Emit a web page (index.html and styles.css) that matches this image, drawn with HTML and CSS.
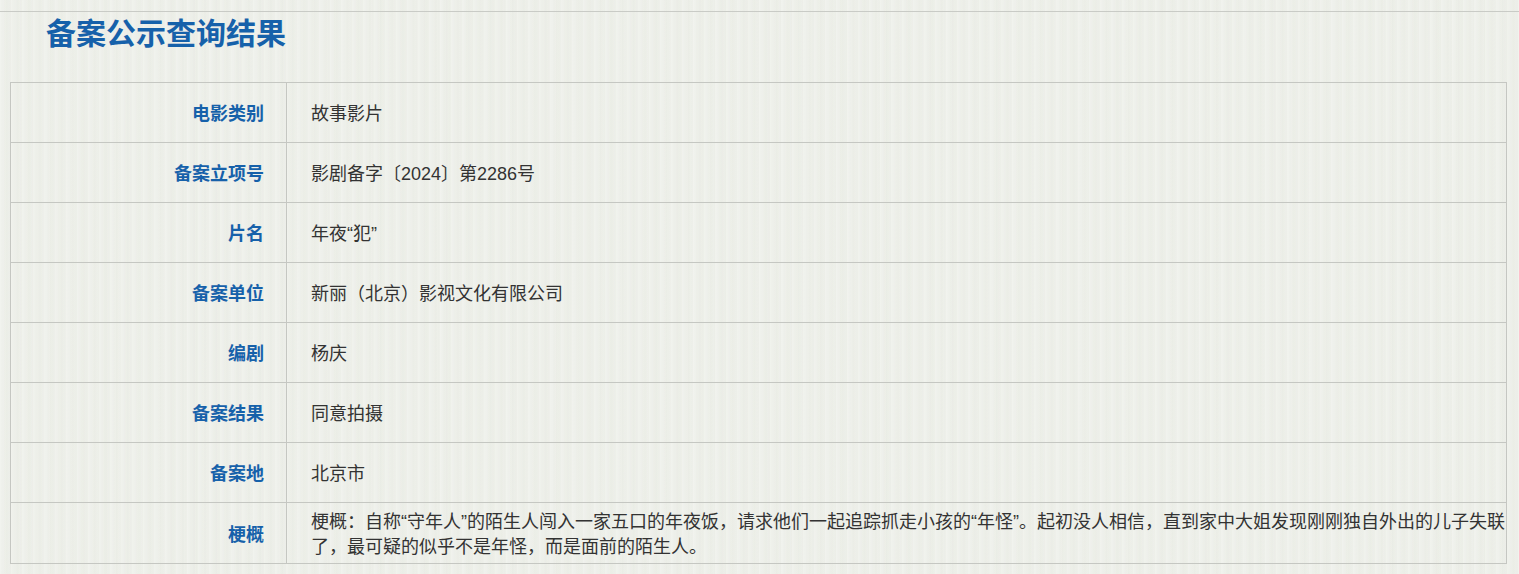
FILE: index.html
```html
<!DOCTYPE html>
<html lang="zh-CN">
<head>
  <meta charset="UTF-8" />
  <title>备案公示查询结果</title>
  <link rel="stylesheet" href="styles.css">
</head>
<body>
  <div class="top-rule"></div>
  <h1 class="title">备案公示查询结果</h1>

  <table class="result">
    <colgroup>
      <col class="col-label" />
      <col />
    </colgroup>
    <tr>
      <th>电影类别</th>
      <td>故事影片</td>
    </tr>
    <tr>
      <th>备案立项号</th>
      <td>影剧备字〔2024〕第2286号</td>
    </tr>
    <tr>
      <th>片名</th>
      <td>年夜“犯”</td>
    </tr>
    <tr>
      <th>备案单位</th>
      <td>新丽（北京）影视文化有限公司</td>
    </tr>
    <tr>
      <th>编剧</th>
      <td>杨庆</td>
    </tr>
    <tr>
      <th>备案结果</th>
      <td>同意拍摄</td>
    </tr>
    <tr>
      <th>备案地</th>
      <td>北京市</td>
    </tr>
    <tr>
      <th>梗概</th>
      <td class="summary">梗概：自称“守年人”的陌生人闯入一家五口的年夜饭，请求他们一起追踪抓走小孩的“年怪”。起初没人相信，直到家中大姐发现刚刚独自外出的儿子失联了，最可疑的似乎不是年怪，而是面前的陌生人。</td>
    </tr>
  </table>
</body>
</html>
```

FILE: styles.css
```css
body {
  margin: 0;
  font-family: "Liberation Sans", "Noto Sans CJK SC", sans-serif;
  color: #333;
  background-color: #eef0ea;
  /* 淡淡的纸纹 */
  background-image:
    repeating-linear-gradient(90deg,
      rgba(255, 255, 255, 0.22) 0px, rgba(255, 255, 255, 0) 4px,
      rgba(210, 214, 205, 0.08) 7px, rgba(255, 255, 255, 0) 11px),
    repeating-linear-gradient(90deg,
      rgba(255, 255, 255, 0) 0px, rgba(225, 228, 220, 0.12) 13px,
      rgba(255, 255, 255, 0) 23px);
}
.top-rule {
  margin-top: 11px;
  border-top: 1px solid #c9cbc6;
}
.title {
  margin: 0;
  padding-left: 46px;
  font-size: 30px;
  line-height: 44px;
  font-weight: bold;
  color: #1661aa;
}
.result {
  margin: 26px 0 0 10px;
  width: 1497px;
  border-collapse: collapse;
  table-layout: fixed;
  font-size: 18px;
}
.col-label {
  width: 276px;
}
.result tr {
  height: 60px;
}
.result th,
.result td {
  border: 1px solid #c5c7c2;
  padding: 7px 0 3px 24px;
  line-height: 25px;
  vertical-align: middle;
}
.result th {
  text-align: right;
  padding: 7px 22px 3px 0;
  color: #1661aa;
  font-weight: bold;
}
.result td {
  text-align: left;
}
```
